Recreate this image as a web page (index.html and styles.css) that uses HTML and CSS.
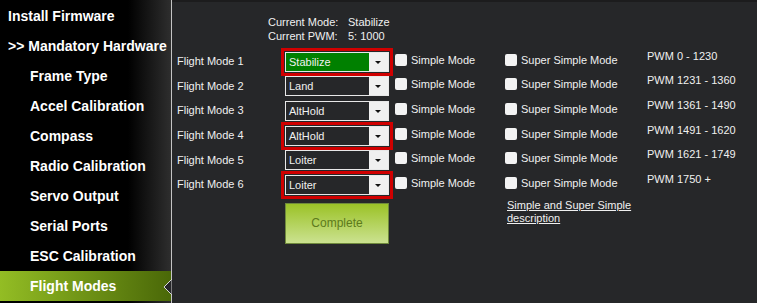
FILE: index.html
```html
<!DOCTYPE html>
<html lang="en">
<head>
    <meta charset="UTF-8">
    <title>Flight Modes</title>
    <link rel="stylesheet" href="styles.css">
</head>
<body>
    <div class="app">
        <!-- Left menu -->
        <div class="sidebar">
            <div class="menu-item">Install Firmware</div>
            <div class="menu-item">&gt;&gt; Mandatory Hardware</div>
            <div class="menu-item sub">Frame Type</div>
            <div class="menu-item sub">Accel Calibration</div>
            <div class="menu-item sub">Compass</div>
            <div class="menu-item sub">Radio Calibration</div>
            <div class="menu-item sub">Servo Output</div>
            <div class="menu-item sub">Serial Ports</div>
            <div class="menu-item sub">ESC Calibration</div>
            <div class="menu-item sub active">Flight Modes
                <svg class="notch" width="9" height="16" viewBox="0 0 9 16">
                    <polygon points="9,0 1,8 9,16" fill="#262729" stroke="#d8d8d8" stroke-width="1"/>
                </svg>
            </div>
        </div>

        <!-- Flight mode panel -->
        <div class="content">
            <div class="current">
                <div class="current-row"><span class="current-label">Current Mode:</span><span>Stabilize</span></div>
                <div class="current-row"><span class="current-label">Current PWM:</span><span>5: 1000</span></div>
            </div>

            <div class="modes">
                <div class="mode-row">
                    <span class="mode-label">Flight Mode 1</span>
                    <div class="combo selected green"><span class="combo-text">Stabilize</span><span class="combo-arrow"></span></div>
                    <label class="check simple"><span class="box"></span>Simple Mode</label>
                    <label class="check super"><span class="box"></span>Super Simple Mode</label>
                    <span class="pwm">PWM 0 - 1230</span>
                </div>
                <div class="mode-row">
                    <span class="mode-label">Flight Mode 2</span>
                    <div class="combo"><span class="combo-text">Land</span><span class="combo-arrow"></span></div>
                    <label class="check simple"><span class="box"></span>Simple Mode</label>
                    <label class="check super"><span class="box"></span>Super Simple Mode</label>
                    <span class="pwm">PWM 1231 - 1360</span>
                </div>
                <div class="mode-row">
                    <span class="mode-label">Flight Mode 3</span>
                    <div class="combo"><span class="combo-text">AltHold</span><span class="combo-arrow"></span></div>
                    <label class="check simple"><span class="box"></span>Simple Mode</label>
                    <label class="check super"><span class="box"></span>Super Simple Mode</label>
                    <span class="pwm">PWM 1361 - 1490</span>
                </div>
                <div class="mode-row">
                    <span class="mode-label">Flight Mode 4</span>
                    <div class="combo selected"><span class="combo-text">AltHold</span><span class="combo-arrow"></span></div>
                    <label class="check simple"><span class="box"></span>Simple Mode</label>
                    <label class="check super"><span class="box"></span>Super Simple Mode</label>
                    <span class="pwm">PWM 1491 - 1620</span>
                </div>
                <div class="mode-row">
                    <span class="mode-label">Flight Mode 5</span>
                    <div class="combo"><span class="combo-text">Loiter</span><span class="combo-arrow"></span></div>
                    <label class="check simple"><span class="box"></span>Simple Mode</label>
                    <label class="check super"><span class="box"></span>Super Simple Mode</label>
                    <span class="pwm">PWM 1621 - 1749</span>
                </div>
                <div class="mode-row">
                    <span class="mode-label">Flight Mode 6</span>
                    <div class="combo selected"><span class="combo-text">Loiter</span><span class="combo-arrow"></span></div>
                    <label class="check simple"><span class="box"></span>Simple Mode</label>
                    <label class="check super"><span class="box"></span>Super Simple Mode</label>
                    <span class="pwm">PWM 1750 +</span>
                </div>
            </div>

            <div class="bottom-row">
                <button class="complete-btn">Complete</button>
                <a class="desc-link" href="#">Simple and Super Simple description</a>
            </div>
        </div>
    </div>
</body>
</html>
```

FILE: styles.css
```css
/* Mission planner style dark theme */
body {
    margin: 0;
    background-color: #262729;
    font-family: "Liberation Sans", Arial, sans-serif;
    color: #f0f0f0;
}
.app {
    display: flex;
    height: 303px;
    overflow: hidden;
}
.sidebar {
    width: 171px;
    flex-shrink: 0;
    padding-top: 1px;
    border-right: 1px solid #c4c4c4;
    background: linear-gradient(to right, #000 0, #000 128px, #2e2e2e 171px);
}
.menu-item {
    position: relative;
    height: 30px;
    line-height: 30px;
    padding-left: 8px;
    font-size: 14px;
    font-weight: bold;
    color: #fff;
    white-space: nowrap;
}
.menu-item.sub {
    padding-left: 30px;
}
.menu-item.active {
    background: linear-gradient(to right, #93bd24, #4a6808);
}
.notch {
    position: absolute;
    right: -1px;
    top: 8px;
}
.content {
    flex: 1;
    border-top: 2px solid #1c1c1d;
    padding-left: 5px;
    font-size: 11px;
}
.current {
    padding-left: 91px;
    padding-top: 13px;
}
.current-row {
    height: 14px;
    line-height: 14px;
}
.current-label {
    display: inline-block;
    width: 80px;
}
.modes {
    margin-top: 6px;
}
.mode-row {
    display: flex;
    align-items: center;
    height: 24.6px;
}
.mode-label {
    width: 108px;
    flex-shrink: 0;
}
.combo {
    display: flex;
    width: 104px;
    height: 20px;
    box-sizing: border-box;
    border: 1px solid #e8e8e8;
    margin-top: 1px;
    flex-shrink: 0;
}
.combo.selected {
    box-shadow: 0 0 0 1px #262729, 0 0 0 4px #d00000;
}
.combo-text {
    flex: 1;
    line-height: 18px;
    padding-left: 3px;
}
.combo.green .combo-text {
    background-color: #008000;
}
.combo-arrow {
    width: 19px;
    background-color: #f0f0f0;
    position: relative;
}
.combo-arrow::after {
    content: "";
    position: absolute;
    left: 6px;
    top: 8px;
    border-left: 3.5px solid transparent;
    border-right: 3.5px solid transparent;
    border-top: 3.5px solid #111;
}
.check {
    display: flex;
    align-items: center;
    margin-bottom: 3px;
    flex-shrink: 0;
}
.simple {
    margin-left: 6px;
    width: 110px;
}
.super {
    width: 142px;
}
.box {
    width: 12px;
    height: 12px;
    background-color: #f3f3f3;
    border-radius: 2px;
    margin-right: 4px;
}
.pwm {
    margin-bottom: 11px;
    white-space: nowrap;
}
.bottom-row {
    display: flex;
    align-items: flex-start;
    margin-top: 2px;
}
.complete-btn {
    margin-left: 108px;
    margin-top: 4px;
    width: 104px;
    height: 41px;
    border: 1px solid #6f8a3c;
    background: linear-gradient(to bottom, #9bc227, #cbe290);
    color: #5d7a1c;
    font-family: "Liberation Sans", Arial, sans-serif;
    font-size: 12px;
    padding: 0;
}
.desc-link {
    margin-left: 118px;
    width: 130px;
    color: #f0f0f0;
    line-height: 13px;
}
```
